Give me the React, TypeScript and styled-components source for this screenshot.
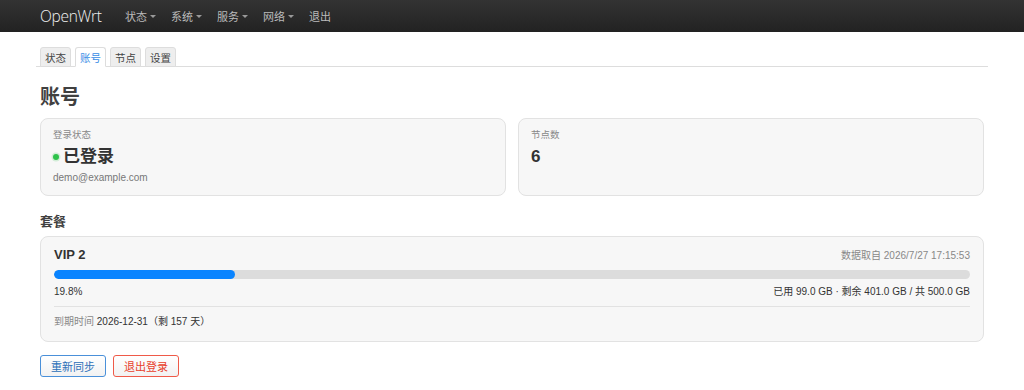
import React from 'react';
import styled, { createGlobalStyle } from 'styled-components';

const GlobalStyle = createGlobalStyle`
  html, body {
    margin: 0;
    padding: 0;
    background: #fff;
  }
  body {
    font-family: 'Liberation Sans', 'Noto Sans CJK SC', Arial, sans-serif;
    font-size: 11px;
    color: #333;
  }
`;

const menuList = ['状态', '系统', '服务', '网络'];
const tabList = ['状态', '账号', '节点', '设置'];

const plan = {
  name: 'VIP 2',
  fetchedAt: '2026/7/27 17:15:53',
  used: 99.0,
  total: 500.0,
  expire: '2026-12-31',
  daysLeft: 157,
};

export default function App() {
  const percent = (plan.used / plan.total) * 100;
  const remain = plan.total - plan.used;

  return (
    <>
      <GlobalStyle />
      <Header>
        <Brand>OpenWrt</Brand>
        <Menu>
          {menuList.map((item) => (
            <MenuItem key={item}>
              {item}
              <Caret />
            </MenuItem>
          ))}
          <MenuItem>退出</MenuItem>
        </Menu>
      </Header>
      <Main>
        <Tabs>
          {tabList.map((item) => (
            <Tab key={item} active={item === '账号'}>
              {item}
            </Tab>
          ))}
        </Tabs>
        <Title>账号</Title>
        <CardRow>
          <Card>
            <CardLabel>登录状态</CardLabel>
            <StatusLine>
              <Dot />
              <BigValue>已登录</BigValue>
            </StatusLine>
            <SubText>demo@example.com</SubText>
          </Card>
          <Card>
            <CardLabel>节点数</CardLabel>
            <BigValue>6</BigValue>
          </Card>
        </CardRow>
        <SectionTitle>套餐</SectionTitle>
        <PlanCard>
          <PlanHead>
            <PlanName>{plan.name}</PlanName>
            <Muted>数据取自 {plan.fetchedAt}</Muted>
          </PlanHead>
          <Track>
            <Fill style={{ width: `${percent}%` }} />
          </Track>
          <UsageRow>
            <span>{percent.toFixed(1)}%</span>
            <span>
              已用 {plan.used.toFixed(1)} GB · 剩余 {remain.toFixed(1)} GB / 共{' '}
              {plan.total.toFixed(1)} GB
            </span>
          </UsageRow>
          <Divider />
          <ExpireRow>
            <Muted>到期时间</Muted> {plan.expire}（剩 {plan.daysLeft} 天）
          </ExpireRow>
        </PlanCard>
        <Actions>
          <ActionButton tone='blue'>重新同步</ActionButton>
          <ActionButton tone='red'>退出登录</ActionButton>
        </Actions>
      </Main>
    </>
  );
}

const Header = styled.div`
  display: flex;
  align-items: center;
  height: 32px;
  padding: 0 40px;
  background: linear-gradient(to bottom, #333 0%, #222 100%);
`;

const Brand = styled.div`
  width: 85px;
  color: #f2f2f2;
  font-family: 'Open Sans', 'Liberation Sans', sans-serif;
  font-size: 15.5px;
  font-weight: 300;
  letter-spacing: -0.3px;
`;

const Menu = styled.div`
  display: flex;
  align-items: center;
  gap: 15px;
`;

const MenuItem = styled.div`
  display: flex;
  align-items: center;
  color: #bbb;
  font-size: 11px;
`;

const Caret = styled.span`
  display: inline-block;
  margin-left: 3px;
  border-left: 3px solid transparent;
  border-right: 3px solid transparent;
  border-top: 3px solid #999;
`;

const Main = styled.div`
  padding: 14px 36px 0 40px;
`;

const Tabs = styled.div`
  display: flex;
  align-items: flex-end;
  gap: 4px;
  height: 20px;
  margin-left: -4px;
  padding-left: 4px;
  border-bottom: 1px solid #ddd;
`;

const Tab = styled.div<{ active?: boolean }>`
  display: flex;
  align-items: center;
  height: 18px;
  padding: 0 4px;
  margin-bottom: -1px;
  border: 1px solid #ddd;
  border-bottom-color: ${({ active }) => (active ? '#fff' : '#ddd')};
  border-radius: 3px 3px 0 0;
  background: ${({ active }) => (active ? '#fff' : '#eee')};
  color: ${({ active }) => (active ? '#3a8ee6' : '#444')};
  font-size: 10.5px;
`;

const Title = styled.h2`
  margin: 18px 0 9px;
  font-size: 20px;
  font-weight: bold;
  line-height: 24px;
  color: #404040;
`;

const CardRow = styled.div`
  display: grid;
  grid-template-columns: 1fr 1fr;
  gap: 12px;
  margin-right: 4px;
`;

const Card = styled.div`
  height: 78px;
  box-sizing: border-box;
  padding: 10px 12px;
  background: #f7f7f7;
  border: 1px solid #e2e2e2;
  border-radius: 8px;
`;

const CardLabel = styled.div`
  font-size: 9.5px;
  color: #888;
  line-height: 12px;
  margin-bottom: 6px;
`;

const StatusLine = styled.div`
  display: flex;
  align-items: center;
  gap: 4px;
`;

const Dot = styled.span`
  width: 6px;
  height: 6px;
  border-radius: 50%;
  background: #2ec24a;
  box-shadow: 0 0 0 1.5px rgba(46, 194, 74, 0.18);
`;

const BigValue = styled.div`
  font-size: 17px;
  font-weight: bold;
  line-height: 20px;
  color: #333;
`;

const SubText = styled.div`
  margin-top: 5px;
  font-size: 10px;
  line-height: 12px;
  color: #777;
`;

const SectionTitle = styled.div`
  margin: 18px 0 6px;
  font-size: 13px;
  font-weight: bold;
  line-height: 16px;
  color: #404040;
`;

const PlanCard = styled.div`
  box-sizing: border-box;
  margin-right: 4px;
  padding: 9px 13px 13px;
  background: #f7f7f7;
  border: 1px solid #e2e2e2;
  border-radius: 8px;
`;

const PlanHead = styled.div`
  display: flex;
  justify-content: space-between;
  align-items: center;
  height: 17px;
  margin-bottom: 7px;
`;

const PlanName = styled.div`
  font-size: 13px;
  font-weight: bold;
  color: #333;
`;

const Muted = styled.span`
  font-size: 10px;
  color: #888;
`;

const Track = styled.div`
  height: 9px;
  border-radius: 5px;
  background: #dcdcdc;
  overflow: hidden;
`;

const Fill = styled.div`
  height: 100%;
  border-radius: 5px;
  background: #0a84ff;
`;

const UsageRow = styled.div`
  display: flex;
  justify-content: space-between;
  margin-top: 7px;
  font-size: 10px;
  line-height: 12px;
  color: #333;
`;

const Divider = styled.div`
  height: 1px;
  margin: 8px 0 9px;
  background: #e2e2e2;
`;

const ExpireRow = styled.div`
  font-size: 10px;
  line-height: 12px;
  color: #333;
`;

const Actions = styled.div`
  display: flex;
  gap: 7px;
  margin-top: 13px;
`;

const ActionButton = styled.button<{ tone: 'blue' | 'red' }>`
  height: 22px;
  padding: 0 10px;
  font-family: inherit;
  font-size: 11px;
  border-radius: 3px;
  background: linear-gradient(to bottom, #fff 0%, #f2f2f2 100%);
  border: 1px solid ${({ tone }) => (tone === 'blue' ? '#4a90d9' : '#ef5a48')};
  color: ${({ tone }) => (tone === 'blue' ? '#2c6fb8' : '#e8402c')};
  cursor: pointer;
`;
